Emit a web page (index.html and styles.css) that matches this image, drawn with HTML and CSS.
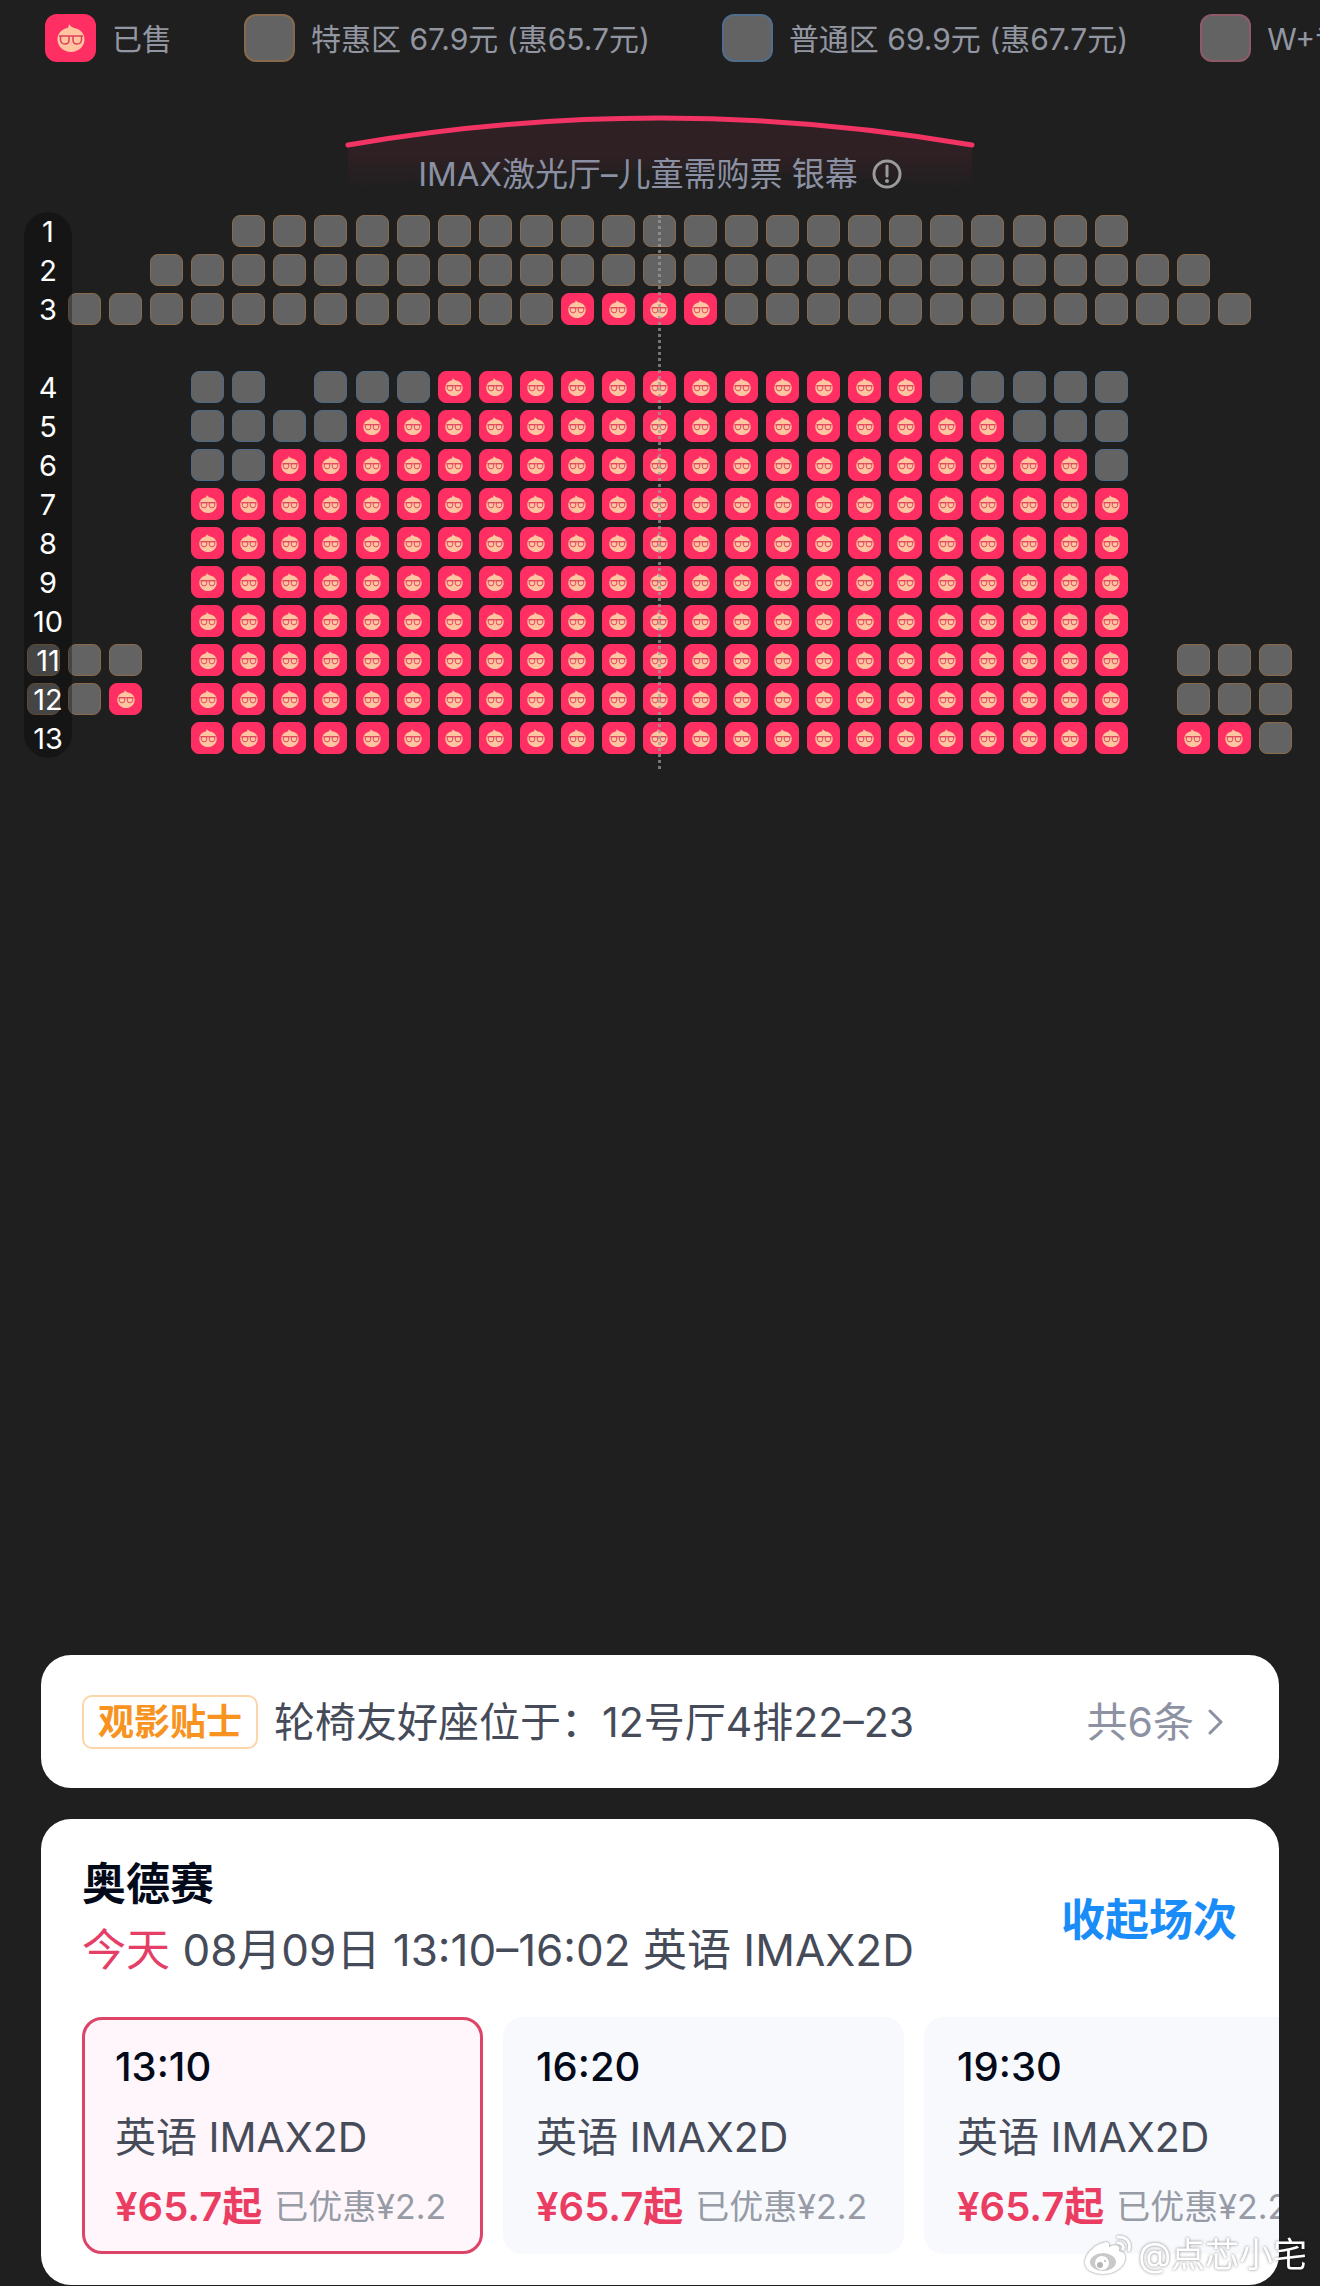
FILE: index.html
```
<!DOCTYPE html>
<html lang="zh-CN">
<head>
<meta charset="UTF-8">
<meta name="viewport" content="width=device-width, initial-scale=1.0">
<title>选座</title>
<link rel="stylesheet" href="styles.css">
</head>
<body>

<svg class="sprite" aria-hidden="true">
    <symbol id="face" viewBox="0 0 28 28">
        <path fill="#fec5a0" d="M12 0c1 2 3 3 5 4 6 1 10.500 5 10.500 11.500C27.500 23 21 28 14 28S.5 23 .5 15.500C.5 9.500 4.500 5 10.500 4 11.500 3 12 1.500 12 0z"/>
        <path fill="none" stroke="#e0405c" stroke-width="1.500" stroke-linejoin="round" d="M2 12h24M3.500 12h8.500v4q0 4-4 4t-4.500-4zM16 12h8.500v4q-.5 4-4.500 4t-4-4z"/>
    </symbol>
</svg>

<main class="page">
    <ul class="legend">
        <li><span class="swatch sold"><svg><use href="#face"/></svg></span>已售</li>
        <li><span class="swatch sale"></span>特惠区 67.9元 (惠65.7元)</li>
        <li><span class="swatch normal"></span>普通区 69.9元 (惠67.7元)</li>
        <li><span class="swatch vip"></span>W+专区 71.9元</li>
    </ul>

    <section class="hall">
        <div class="screen">
            <svg class="arc" viewBox="0 0 680 90" aria-hidden="true">
                <defs>
                    <linearGradient id="glow" x1="0" y1="0" x2="0" y2="1">
                        <stop offset="0" stop-color="#ff2e63" stop-opacity=".07"/>
                        <stop offset=".5" stop-color="#ff2e63" stop-opacity=".07"/>
                        <stop offset="1" stop-color="#ff2e63" stop-opacity="0"/>
                    </linearGradient>
                </defs>
                <path fill="url(#glow)" d="M28 36Q340-18 652 36V80Q340 40 28 80z"/>
                <path fill="none" stroke="#f23465" stroke-width="5" stroke-linecap="round" d="M28 35Q340-19 652 35"/>
            </svg>
            <h2>IMAX激光厅–儿童需购票 银幕
                <svg class="info" viewBox="0 0 30 30" aria-hidden="true">
                    <circle cx="15" cy="15" r="13" fill="none" stroke="#9b9b9b" stroke-width="3"/>
                    <path d="M15 7v10" stroke="#9b9b9b" stroke-width="3" stroke-linecap="round"/>
                    <circle cx="15" cy="22" r="2" fill="#9b9b9b"/>
                </svg>
            </h2>
        </div>
        <div class="seat-map">
            <div class="seats" id="seats"></div>
            <ol class="row-bar" id="rowBar"></ol>
        </div>
    </section>

    <section class="card tips">
        <span class="tag">观影贴士</span>
        <p>轮椅友好座位于：12号厅4排22–23</p>
        <a href="#tips">共6条
            <svg viewBox="0 0 16 26" aria-hidden="true"><path d="M2 2l11 11L2 24" fill="none" stroke="#8d92a3" stroke-width="3" stroke-linecap="round" stroke-linejoin="round"/></svg>
        </a>
    </section>

    <section class="card film">
        <header>
            <div>
                <h1>奥德赛</h1>
                <p><em>今天</em> 08月09日 13:10–16:02 英语 IMAX2D</p>
            </div>
            <button type="button" class="fold">收起场次</button>
        </header>
        <div class="shows">
            <button type="button" class="show active">
                <span class="time">13:10</span>
                <span class="lang">英语 IMAX2D</span>
                <span class="price"><b>¥65.7起</b>已优惠¥2.2</span>
            </button>
            <button type="button" class="show">
                <span class="time">16:20</span>
                <span class="lang">英语 IMAX2D</span>
                <span class="price"><b>¥65.7起</b>已优惠¥2.2</span>
            </button>
            <button type="button" class="show">
                <span class="time">19:30</span>
                <span class="lang">英语 IMAX2D</span>
                <span class="price"><b>¥65.7起</b>已优惠¥2.2</span>
            </button>
        </div>
    </section>
</main>

<div class="watermark">
    <svg viewBox="0 0 48 40" aria-hidden="true">
        <path fill="#fff" d="M19 8c4-2 7-1 6 4 6-3 12-2 10 4 5 1 7 4 6 9-2 8-11 14-22 14C8 39 0 34 1 26 2 18 12 9 19 8z"/>
        <ellipse cx="19" cy="27" rx="13" ry="9" fill="#c9c9cc"/>
        <circle cx="18" cy="28" r="7" fill="#fff"/>
        <circle cx="16" cy="30" r="3" fill="#b5b5b8"/>
        <circle cx="21" cy="26" r="1" fill="#b5b5b8"/>
        <path fill="none" stroke="#fff" stroke-width="3" stroke-linecap="round" d="M34 2c8-1 13 5 11 13M34 8c4 0 6 3 5 6"/>
    </svg>
    @点芯小宅
</div>

<script src="seats.js"></script>
</body>
</html>
```

FILE: styles.css
```
* {
    box-sizing: border-box;
}

body {
    margin: 0;
    background: #1f1f1f;
    font-family: Inter, "Noto Sans CJK SC", sans-serif;
    color: #464b59;
    overflow-x: hidden;
}

h1, h2, p, ul, ol {
    margin: 0;
    padding: 0;
    list-style: none;
}

button {
    font-family: inherit;
    border: none;
    padding: 0;
    cursor: pointer;
}

.sprite {
    display: none;
}

.page {
    display: flex;
    flex-direction: column;
    min-height: 100vh;
    padding-bottom: 1px;
}

/* legend */
.legend {
    display: flex;
    gap: 72px;
    padding: 14px 0 0 45px;
    overflow: hidden;
    white-space: nowrap;
    font-size: 30px;
    line-height: 50px;
    color: #9296a1;
}

.legend li {
    display: flex;
    flex: none;
    gap: 16px;
}

.swatch {
    display: flex;
    align-items: center;
    justify-content: center;
    width: 51px;
    height: 48px;
    border: 2px solid;
    border-radius: 12px;
    background: #636363;
}

.swatch svg {
    width: 28px;
    height: 28px;
}

.sale {
    border-color: #86694c;
}

.normal {
    border-color: #506d8b;
}

.vip {
    border-color: #8d5b68;
}

.sold {
    background: #ff2e63;
    border-color: #ff2e63;
}

/* hall */
.hall {
    flex: 1;
    padding-top: 46px;
}

.screen {
    display: grid;
    justify-items: center;
}

.arc {
    grid-area: 1 / 1;
    width: 680px;
    height: 90px;
}

.screen h2 {
    grid-area: 1 / 1;
    display: flex;
    align-items: center;
    gap: 14px;
    margin-top: 38px;
    font-size: 33px;
    font-weight: 400;
    line-height: 48px;
    color: #8b90a3;
}

.info {
    width: 30px;
    height: 30px;
}

.seat-map {
    position: relative;
    padding: 15px 28px 15px 27px;
}

.seats {
    display: grid;
    grid-template-columns: repeat(31, minmax(0, 33px));
    grid-auto-rows: 32px;
    row-gap: 7px;
    justify-content: space-between;
}

.seat {
    display: flex;
    align-items: center;
    justify-content: center;
    border: 1px solid;
    border-radius: 8px;
    background: #636363;
}

.seat.sale {
    border-color: #8a6a4a;
}

.seat.normal {
    border-color: #4c6a86;
}

.seat.sold {
    background: #ff2e63;
    border-color: #ff2e63;
}

.seat svg {
    width: 18px;
    height: 18px;
}

/* aisle line down the middle of the hall */
.seat-map::after {
    content: "";
    position: absolute;
    top: 15px;
    bottom: 0;
    left: 50%;
    margin-left: -2px;
    border-left: 3px dotted #9c9c9c;
    opacity: .7;
}

.row-bar {
    position: absolute;
    top: 12px;
    left: 24px;
    display: grid;
    grid-auto-rows: 39px;
    width: 48px;
    border-radius: 24px;
    background: rgba(0, 0, 0, .3);
    color: #fff;
    font-size: 29px;
    line-height: 39px;
    text-align: center;
}

/* bottom cards */
.card {
    margin: 0 41px;
    border-radius: 30px;
    background: #fff;
}

.tips {
    display: flex;
    align-items: center;
    gap: 16px;
    height: 133px;
    margin-bottom: 31px;
    padding: 0 41px;
    font-size: 41px;
    line-height: 60px;
    white-space: nowrap;
}

.tips p {
    flex: 1;
}

.tag {
    padding: 0 14px;
    border: 2px solid #fcd5a8;
    border-radius: 10px;
    color: #f7931e;
    font-size: 36px;
    font-weight: 700;
    line-height: 50px;
}

.tips a {
    display: flex;
    align-items: center;
    gap: 14px;
    padding-right: 14px;
    color: #8d92a3;
    text-decoration: none;
}

.tips a svg {
    width: 16px;
    height: 26px;
}

.film {
    padding: 32px 0 31px 41px;
    overflow: hidden;
}

.film header {
    display: flex;
    align-items: center;
    justify-content: space-between;
    padding-right: 42px;
    margin-bottom: 34px;
}

.film h1 {
    color: #030a1a;
    font-size: 44px;
    font-weight: 700;
    line-height: 66px;
}

.film header p {
    font-size: 44px;
    line-height: 66px;
    white-space: nowrap;
}

.film em {
    color: #e53f68;
    font-style: normal;
}

.fold {
    background: none;
    color: #1a8cf8;
    font-size: 44px;
    font-weight: 700;
}

.shows {
    display: flex;
    gap: 20px;
    overflow: hidden;
}

.show {
    display: flex;
    flex: none;
    flex-direction: column;
    width: 401px;
    padding: 12px 30px 9px;
    border: 3px solid #f8f9fd;
    border-radius: 20px;
    background: #f8f9fd;
    color: #464b59;
    font-size: 41px;
    line-height: 70px;
    text-align: left;
    white-space: nowrap;
}

.show.active {
    border-color: #dd4468;
    background: #fef6fa;
}

.time {
    color: #030a1a;
    font-size: 40px;
    font-weight: 500;
}

.price {
    display: flex;
    gap: 12px;
    color: #969ba6;
    font-size: 34px;
}

.price b {
    color: #eb3d62;
    font-size: 40px;
    font-weight: 600;
}

.watermark {
    position: fixed;
    right: 13px;
    bottom: 6px;
    display: flex;
    align-items: center;
    gap: 6px;
    color: #fff;
    font-size: 34px;
    line-height: 50px;
    text-shadow: 0 0 3px rgba(0, 0, 0, .5);
}

.watermark svg {
    width: 48px;
    height: 40px;
    overflow: visible;
    filter: drop-shadow(0 0 1px rgba(0, 0, 0, .5));
}
```

FILE: seats.js
```
// s = sale seat, n = normal seat, x = sold, . = no seat
var rows = [
    [1,  ".....ssssssssssssssssssssss...."],
    [2,  "...ssssssssssssssssssssssssss.."],
    [3,  ".ssssssssssssxxxxsssssssssssss."],
    ["", "..............................."],
    [4,  "....nn.nnnxxxxxxxxxxxxnnnnn...."],
    [5,  "....nnnnxxxxxxxxxxxxxxxxnnn...."],
    [6,  "....nnxxxxxxxxxxxxxxxxxxxxn...."],
    [7,  "....xxxxxxxxxxxxxxxxxxxxxxx...."],
    [8,  "....xxxxxxxxxxxxxxxxxxxxxxx...."],
    [9,  "....xxxxxxxxxxxxxxxxxxxxxxx...."],
    [10, "....xxxxxxxxxxxxxxxxxxxxxxx...."],
    [11, "sss.xxxxxxxxxxxxxxxxxxxxxxx.sss"],
    [12, "ssx.xxxxxxxxxxxxxxxxxxxxxxx.sss"],
    [13, "....xxxxxxxxxxxxxxxxxxxxxxx.xxs"]
];
var types = { s: "sale", n: "normal", x: "sold" };
var seats = "";
var labels = "";

rows.forEach(function(row) {
    labels += "<li>" + row[0] + "</li>";
    row[1].split("").forEach(function(c, i) {
        if (c === ".") {
            seats += "<span></span>";
            return;
        }
        var face = c === "x" ? '<svg><use href="#face"/></svg>' : "";
        seats += '<button type="button" class="seat ' + types[c] + '" aria-label="' + row[0] + "排" + (i + 1) + '座"' + (c === "x" ? " disabled" : "") + ">" + face + "</button>";
    });
});

document.getElementById("seats").innerHTML = seats;
document.getElementById("rowBar").innerHTML = labels;
```
